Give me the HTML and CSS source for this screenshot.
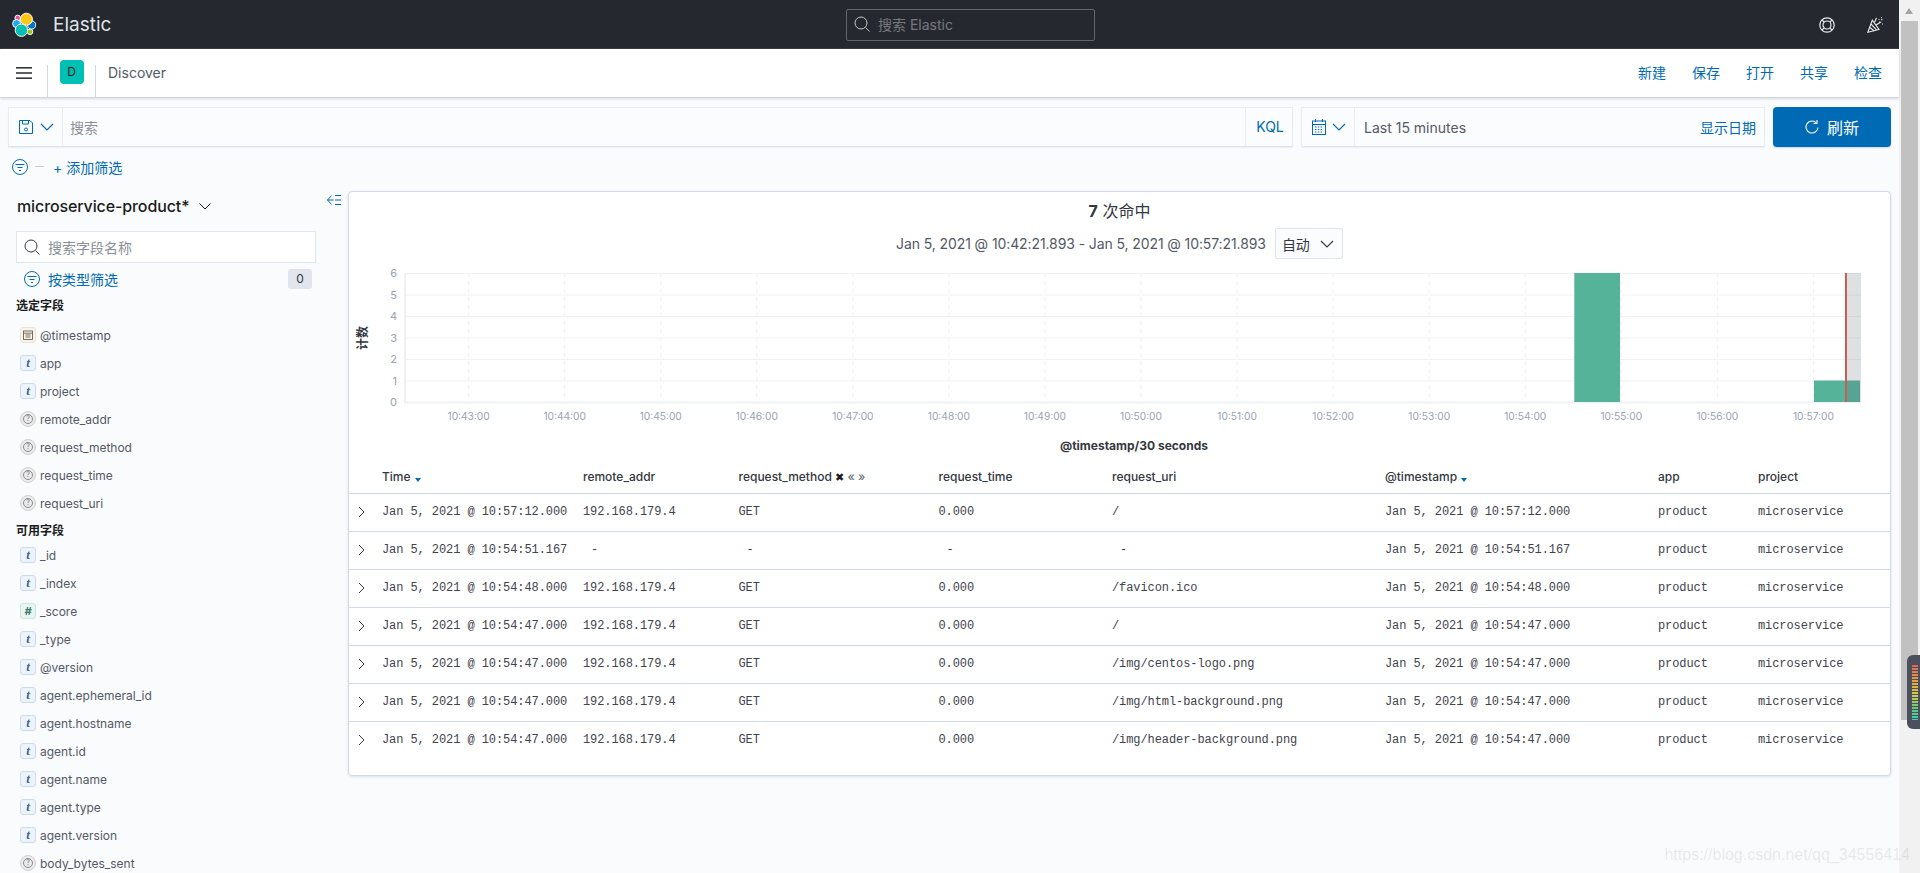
FILE: index.html
```html
<!DOCTYPE html>
<html>
<head>
<meta charset="utf-8">
<title>Discover - Elastic</title>
<link rel="stylesheet" href="styles.css">
</head>
<body>

<div id="container">
<div id="main">

	<!-- top dark bar -->
	<div class="header">
		<div class="brand">
			<svg class="logo" width="32" height="32" viewBox="0 0 32 32">
				<g stroke="#fff" stroke-width="1">
					<circle cx="13.7" cy="9" r="2.8" fill="#f04e98"/>
					<circle cx="12.6" cy="14.6" r="4" fill="#1ba9f5"/>
					<circle cx="27.6" cy="16" r="4.2" fill="#0077cc"/>
					<circle cx="26" cy="22.8" r="2.8" fill="#93c90e"/>
					<circle cx="22.4" cy="10.2" r="6" fill="#fec514"/>
					<circle cx="17.4" cy="21.2" r="6.2" fill="#00bfb3"/>
				</g>
			</svg>
			<span class="brand-name">Elastic</span>
		</div>
		<div class="global-search">
			<svg width="16" height="16" viewBox="0 0 16 16" fill="none" stroke="#c4c6ca"><circle cx="7" cy="7" r="6"/><path d="M11.5 11.5L15.5 15.5"/></svg>
			<span>搜索 Elastic</span>
		</div>
		<div class="header-icons">
			<svg width="16" height="16" viewBox="0 0 16 16" fill="none" stroke="#e8e9ec" stroke-width="1.2"><circle cx="8" cy="8" r="7.2"/><circle cx="8" cy="8" r="4"/><path d="M3 3l2.2 2.2M13 3l-2.2 2.2M3 13l2.2-2.2M13 13l-2.2-2.2"/></svg>
			<svg width="16" height="16" viewBox="0 0 16 16" fill="none" stroke="#e8e9ec" stroke-width="1.1"><path d="M.8 15.2L5.3 3.2L12 12.5Z"/><path d="M2.8 10.5l4.5 3.5M4 7l5.5 5.8"/><path d="M7.5 5.5L9.5.8M9 8l5-3"/><path d="M11.5 2.5h1M14 .8h1M14 2.8h1.5M12 5h1M15 7h1"/></svg>
		</div>
	</div>

	<!-- breadcrumb bar -->
	<div class="nav">
		<div class="nav-cell">
			<svg width="16" height="12" viewBox="0 0 16 12" fill="#343741"><rect width="16" height="1.6"/><rect y="5.2" width="16" height="1.6"/><rect y="10.4" width="16" height="1.6"/></svg>
		</div>
		<div class="nav-rule"></div>
		<div class="nav-cell"><div class="avatar">D</div></div>
		<div class="nav-rule"></div>
		<div class="crumb">Discover</div>
		<div class="nav-links">
			<a>新建</a><a>保存</a><a>打开</a><a>共享</a><a>检查</a>
		</div>
	</div>

	<!-- query bar -->
	<div class="query">
		<div class="query-box search-box">
			<div class="query-btn save-btn">
				<svg width="16" height="16" viewBox="0 0 16 16" fill="none" stroke="#006bb4"><path d="M1.5 1.5h10.5l2.5 2.5v10.5h-13z"/><path d="M4.5 1.5v3.5h6v-3.5"/><circle cx="8" cy="10.5" r="1.5"/></svg>
				<svg class="chev" width="14" height="8" viewBox="0 0 14 8" fill="none" stroke="#006bb4" stroke-width="1.1"><path d="M1 1l6 6 6-6"/></svg>
			</div>
			<div class="query-text placeholder">搜索</div>
			<div class="kql">KQL</div>
		</div>
		<div class="query-box date-box">
			<div class="query-btn cal-btn">
				<svg width="14" height="16" viewBox="0 0 14 16" fill="none" stroke="#006bb4"><rect x=".5" y="2" width="13" height="13.5"/><path d="M.5 5.5h13M3.5 0v3M10.5 0v3"/><path d="M3 8h8M3 10.5h8M3 13h8" stroke-dasharray="1.4 1.4"/></svg>
				<svg class="chev" width="14" height="8" viewBox="0 0 14 8" fill="none" stroke="#006bb4" stroke-width="1.1"><path d="M1 1l6 6 6-6"/></svg>
			</div>
			<div class="query-text date-text">Last 15 minutes</div>
			<a class="show-dates">显示日期</a>
		</div>
		<div class="refresh">
			<svg width="14" height="16" viewBox="0 0 14 16" fill="none" stroke="#fff" stroke-width="1.1"><path d="M11.5 4A6 6 0 1 0 13 8.5"/><path d="M12 1v3.5H8.5"/></svg>
			<span>刷新</span>
		</div>
	</div>

	<!-- filter row -->
	<div class="filters">
		<svg width="16" height="16" viewBox="0 0 16 16" fill="none" stroke="#006bb4"><circle cx="8" cy="8" r="7.5"/><path d="M3.5 5.5h9M5.5 8.5h5M7 11.5h2"/></svg>
		<span class="filter-dash"></span>
		<a class="add-filter"><span class="plus">+</span>添加筛选</a>
	</div>

	<div class="content">

		<!-- field list -->
		<div class="sidebar">
			<div class="index-row">
				<div class="index-name">microservice-product*
					<svg width="12" height="7" viewBox="0 0 12 7" fill="none" stroke="#1a1c21"><path d="M.5.5L6 6l5.5-5.5"/></svg>
				</div>
				<svg class="collapse" width="14" height="10" viewBox="0 0 14 10" fill="none" stroke="#006bb4"><path d="M4.5.5L.5 5l4 4.5M.5 5h6M8 .5h6M8 5h6M8 9.5h6"/></svg>
			</div>
			<div class="field-search">
				<svg width="16" height="16" viewBox="0 0 16 16" fill="none" stroke="#343741"><circle cx="7" cy="7" r="6"/><path d="M11.5 11.5L15.5 15.5"/></svg>
				<span>搜索字段名称</span>
			</div>
			<div class="type-filter">
				<svg width="16" height="16" viewBox="0 0 16 16" fill="none" stroke="#006bb4"><circle cx="8" cy="8" r="7.5"/><path d="M3.5 5.5h9M5.5 8.5h5M7 11.5h2"/></svg>
				<a>按类型筛选</a>
				<span class="badge">0</span>
			</div>

			<div class="field-head">选定字段</div>
			<ul class="fields">
				<li><span class="token tok-date"><svg width="10" height="10" viewBox="0 0 10 10" fill="none" stroke="#6b5f4c" stroke-width=".9"><rect x=".5" y="1" width="9" height="8.5"/><path d="M.5 3.2h9M2.5 5h5M2.5 7h5"/></svg></span>@timestamp</li>
				<li><span class="token tok-str">t</span>app</li>
				<li><span class="token tok-str">t</span>project</li>
				<li><span class="token tok-any"><i>?</i></span>remote_addr</li>
				<li><span class="token tok-any"><i>?</i></span>request_method</li>
				<li><span class="token tok-any"><i>?</i></span>request_time</li>
				<li><span class="token tok-any"><i>?</i></span>request_uri</li>
			</ul>

			<div class="field-head field-head-2">可用字段</div>
			<ul class="fields fields-2">
				<li><span class="token tok-str">t</span>_id</li>
				<li><span class="token tok-str">t</span>_index</li>
				<li><span class="token tok-num">#</span>_score</li>
				<li><span class="token tok-str">t</span>_type</li>
				<li><span class="token tok-str">t</span>@version</li>
				<li><span class="token tok-str">t</span>agent.ephemeral_id</li>
				<li><span class="token tok-str">t</span>agent.hostname</li>
				<li><span class="token tok-str">t</span>agent.id</li>
				<li><span class="token tok-str">t</span>agent.name</li>
				<li><span class="token tok-str">t</span>agent.type</li>
				<li><span class="token tok-str">t</span>agent.version</li>
				<li><span class="token tok-any"><i>?</i></span>body_bytes_sent</li>
			</ul>
		</div>

		<!-- results -->
		<div class="card">
			<div class="hits"><b>7</b> 次命中</div>
			<div class="range">
				<span class="range-text">Jan 5, 2021 @ 10:42:21.893 - Jan 5, 2021 @ 10:57:21.893</span>
				<div class="interval">自动
					<svg width="14" height="8" viewBox="0 0 14 8" fill="none" stroke="#343741" stroke-width="1.1"><path d="M1 1l6 6 6-6"/></svg>
				</div>
			</div>

			<svg class="chart" width="1541" height="200" viewBox="0 0 1541 200">
				<path class="grid-h" d="M56 14.5H1512M56 36H1512M56 57.5H1512M56 79H1512M56 100.5H1512M56 122H1512"/>
				<path class="grid-v" d="M119.6 14V143M215.66 14V143M311.72 14V143M407.78 14V143M503.84 14V143M599.9 14V143M695.96 14V143M792.02 14V143M888.08 14V143M984.14 14V143M1080.2 14V143M1176.26 14V143M1272.32 14V143M1368.38 14V143M1464.44 14V143"/>
				<path class="axis" d="M56 14V143.5H1512"/>
				<rect class="bar" x="1225.3" y="14" width="45.7" height="129"/>
				<rect class="bar" x="1465" y="121.5" width="46" height="21.5"/>
				<rect class="shade" x="1496.5" y="14" width="15.5" height="129"/>
				<rect class="now" x="1496" y="14" width="2" height="129"/>
				<g class="y-ticks">
					<text x="48" y="18">6</text>
					<text x="48" y="39.5">5</text>
					<text x="48" y="61">4</text>
					<text x="48" y="82.5">3</text>
					<text x="48" y="104">2</text>
					<text x="48" y="125.5">1</text>
					<text x="48" y="147">0</text>
				</g>
				<g class="x-ticks">
					<text x="119.6" y="161">10:43:00</text>
					<text x="215.66" y="161">10:44:00</text>
					<text x="311.72" y="161">10:45:00</text>
					<text x="407.78" y="161">10:46:00</text>
					<text x="503.84" y="161">10:47:00</text>
					<text x="599.9" y="161">10:48:00</text>
					<text x="695.96" y="161">10:49:00</text>
					<text x="792.02" y="161">10:50:00</text>
					<text x="888.08" y="161">10:51:00</text>
					<text x="984.14" y="161">10:52:00</text>
					<text x="1080.2" y="161">10:53:00</text>
					<text x="1176.26" y="161">10:54:00</text>
					<text x="1272.32" y="161">10:55:00</text>
					<text x="1368.38" y="161">10:56:00</text>
					<text x="1464.44" y="161">10:57:00</text>
				</g>
				<text class="axis-title" transform="translate(18 79) rotate(-90)">计数</text>
				<text class="axis-title" x="785" y="191">@timestamp/30 seconds</text>
			</svg>

			<table class="docs">
				<colgroup>
					<col class="c-toggle"><col class="c-time"><col class="c-addr"><col class="c-method"><col class="c-rtime"><col class="c-uri"><col class="c-stamp"><col class="c-app"><col>
				</colgroup>
				<thead>
					<tr>
						<th></th>
						<th>Time <span class="sort"></span></th>
						<th>remote_addr</th>
						<th>request_method <span class="col-x">✖</span> <span class="col-mv">«</span> <span class="col-mv">»</span></th>
						<th>request_time</th>
						<th>request_uri</th>
						<th>@timestamp <span class="sort"></span></th>
						<th>app</th>
						<th>project</th>
					</tr>
				</thead>
				<tbody>
					<tr>
						<td class="toggle"><svg width="7" height="12" viewBox="0 0 7 12" fill="none" stroke="#343741"><path d="M1 1l5 5-5 5"/></svg></td>
						<td>Jan 5, 2021 @ 10:57:12.000</td><td>192.168.179.4</td><td>GET</td><td>0.000</td><td>/</td><td>Jan 5, 2021 @ 10:57:12.000</td><td>product</td><td>microservice</td>
					</tr>
					<tr>
						<td class="toggle"><svg width="7" height="12" viewBox="0 0 7 12" fill="none" stroke="#343741"><path d="M1 1l5 5-5 5"/></svg></td>
						<td>Jan 5, 2021 @ 10:54:51.167</td><td class="empty">-</td><td class="empty">-</td><td class="empty">-</td><td class="empty">-</td><td>Jan 5, 2021 @ 10:54:51.167</td><td>product</td><td>microservice</td>
					</tr>
					<tr>
						<td class="toggle"><svg width="7" height="12" viewBox="0 0 7 12" fill="none" stroke="#343741"><path d="M1 1l5 5-5 5"/></svg></td>
						<td>Jan 5, 2021 @ 10:54:48.000</td><td>192.168.179.4</td><td>GET</td><td>0.000</td><td>/favicon.ico</td><td>Jan 5, 2021 @ 10:54:48.000</td><td>product</td><td>microservice</td>
					</tr>
					<tr>
						<td class="toggle"><svg width="7" height="12" viewBox="0 0 7 12" fill="none" stroke="#343741"><path d="M1 1l5 5-5 5"/></svg></td>
						<td>Jan 5, 2021 @ 10:54:47.000</td><td>192.168.179.4</td><td>GET</td><td>0.000</td><td>/</td><td>Jan 5, 2021 @ 10:54:47.000</td><td>product</td><td>microservice</td>
					</tr>
					<tr>
						<td class="toggle"><svg width="7" height="12" viewBox="0 0 7 12" fill="none" stroke="#343741"><path d="M1 1l5 5-5 5"/></svg></td>
						<td>Jan 5, 2021 @ 10:54:47.000</td><td>192.168.179.4</td><td>GET</td><td>0.000</td><td>/img/centos-logo.png</td><td>Jan 5, 2021 @ 10:54:47.000</td><td>product</td><td>microservice</td>
					</tr>
					<tr>
						<td class="toggle"><svg width="7" height="12" viewBox="0 0 7 12" fill="none" stroke="#343741"><path d="M1 1l5 5-5 5"/></svg></td>
						<td>Jan 5, 2021 @ 10:54:47.000</td><td>192.168.179.4</td><td>GET</td><td>0.000</td><td>/img/html-background.png</td><td>Jan 5, 2021 @ 10:54:47.000</td><td>product</td><td>microservice</td>
					</tr>
					<tr>
						<td class="toggle"><svg width="7" height="12" viewBox="0 0 7 12" fill="none" stroke="#343741"><path d="M1 1l5 5-5 5"/></svg></td>
						<td>Jan 5, 2021 @ 10:54:47.000</td><td>192.168.179.4</td><td>GET</td><td>0.000</td><td>/img/header-background.png</td><td>Jan 5, 2021 @ 10:54:47.000</td><td>product</td><td>microservice</td>
					</tr>
				</tbody>
			</table>
		</div>
	</div>
</div>

<!-- browser scrollbar -->
<div class="scrollbar">
	<div class="scroll-up"></div>
	<div class="scroll-thumb"></div>
</div>

<div class="meter"><div class="meter-bars"></div></div>
<div class="watermark">https://blog.csdn.net/qq_34556414</div>

</div>
</body>
</html>
```

FILE: styles.css
```css
html, body {
	margin: 0;
	padding: 0;
	height: 100%;
	overflow: hidden;
}
body {
	font-family: Inter, "Noto Sans CJK SC", sans-serif;
	font-size: 14px;
	color: #343741;
	background-color: #fafbfd;
}
a {
	color: #006bb4;
}
svg {
	flex: none;
	display: block;
}

#container {
	position: relative;
	display: flex;
	height: 873px;
	overflow: hidden;
}
#main {
	flex: 1;
	min-width: 0;
	display: flex;
	flex-direction: column;
}

/* top dark bar */
.header {
	flex: none;
	height: 49px;
	background-color: #25282f;
	display: grid;
	grid-template-columns: 846px 249px 1fr;
	align-items: center;
}
.brand {
	display: flex;
	align-items: center;
	padding-left: 4px;
}
.brand-name {
	margin-left: 17px;
	font-size: 19px;
	color: #dfe3e8;
}
.global-search {
	height: 32px;
	box-sizing: border-box;
	border: 1px solid #64666b;
	border-radius: 2px;
	display: flex;
	align-items: center;
	padding: 0 0 2px 7px;
	gap: 8px;
	color: #77797e;
}
.header-icons {
	display: flex;
	justify-content: flex-end;
	gap: 32px;
	padding-right: 16px;
}

/* breadcrumb bar */
.nav {
	flex: none;
	height: 48px;
	background-color: #fff;
	display: flex;
	align-items: center;
	box-shadow: 0 1px 2px #c9ced8, 0 2px 3px #e4e7ee;
	position: relative;
}
.nav-cell {
	width: 47px;
	display: flex;
	justify-content: center;
}
.nav-rule {
	width: 1px;
	height: 32px;
	align-self: flex-end;
	background-color: #d3dae6;
}
.avatar {
	width: 24px;
	height: 24px;
	margin-top: -2px;
	border-radius: 4px;
	background-color: #00bfb3;
	color: #1a1c21;
	font-size: 12px;
	line-height: 24px;
	text-align: center;
}
.crumb {
	margin-left: 12px;
	color: #535966;
	margin-top: -2px;
}
.nav-links {
	margin-left: auto;
	padding-right: 17px;
	display: flex;
	gap: 26px;
	margin-top: -2px;
}

/* query bar */
.query {
	flex: none;
	margin-top: 10px;
	padding: 0 8px;
	height: 40px;
	display: flex;
	gap: 8px;
}
.query-box {
	box-sizing: border-box;
	height: 40px;
	display: flex;
	align-items: center;
	background-color: #fbfcfd;
	border: 1px solid #e9edf3;
	border-bottom-color: #dfe3ec;
	box-shadow: 0 1px 1px #eceff5;
}
.search-box {
	flex: 1;
}
.date-box {
	width: 464px;
}
.query-btn {
	height: 100%;
	display: flex;
	align-items: center;
	gap: 6px;
	padding-left: 10px;
	box-sizing: border-box;
	border-right: 1px solid #e9edf3;
}
.save-btn {
	width: 54px;
	padding-left: 9px;
}
.cal-btn {
	width: 53px;
}
.query-text {
	flex: 1;
	padding-left: 7px;
	color: #535966;
}
.date-text {
	padding-left: 9px;
}
.placeholder {
	color: #8a8f99;
}
.kql {
	height: 100%;
	width: 47px;
	box-sizing: border-box;
	border-left: 1px solid #e9edf3;
	padding-left: 2px;
	color: #006bb4;
	line-height: 38px;
	text-align: center;
}
.show-dates {
	padding-right: 8px;
}
.refresh {
	width: 118px;
	height: 40px;
	border-radius: 4px;
	background-color: #006bb4;
	color: #fff;
	display: flex;
	align-items: center;
	justify-content: center;
	gap: 8px;
	box-shadow: 0 1px 2px #c9d6e6;
	font-size: 16px;
}

/* filter row */
.filters {
	flex: none;
	height: 44px;
	padding: 0 0 5px 12px;
	box-sizing: border-box;
	display: flex;
	align-items: center;
}
.filter-dash {
	width: 9px;
	height: 1px;
	margin: 0 9px 0 7px;
	background-color: #c9ced8;
}
.plus {
	margin-right: 4px;
}

.content {
	flex: 1;
	min-height: 0;
	display: flex;
}

/* field list */
.sidebar {
	flex: none;
	width: 348px;
	box-sizing: border-box;
	padding-left: 16px;
	overflow: hidden;
}
.index-row {
	height: 30px;
	display: flex;
	align-items: center;
	justify-content: space-between;
	padding-right: 7px;
}
.index-name {
	display: flex;
	align-items: center;
	gap: 10px;
	font-size: 16px;
	font-weight: 500;
	letter-spacing: -.11px;
	color: #1a1c21;
	margin-left: 1px;
}
.collapse {
	margin-top: -12px;
}
.field-search {
	width: 300px;
	height: 32px;
	margin-top: 10px;
	box-sizing: border-box;
	border: 1px solid #e0e5ee;
	background-color: #fff;
	display: flex;
	align-items: center;
	gap: 8px;
	padding: 0 0 1px 7px;
	color: #8a8f99;
}
.type-filter {
	width: 296px;
	height: 20px;
	margin-top: 6px;
	padding-left: 8px;
	box-sizing: border-box;
	display: flex;
	align-items: center;
	gap: 8px;
}
.badge {
	margin-left: auto;
	width: 24px;
	height: 20px;
	border-radius: 3px;
	background-color: #e0e5ee;
	color: #343741;
	font-size: 12px;
	line-height: 20px;
	text-align: center;
}
.field-head {
	height: 18px;
	margin-top: 8px;
	font-size: 12px;
	font-weight: 700;
	line-height: 18px;
	color: #1a1c21;
}
.field-head-2 {
	margin-top: 5px;
}
.fields {
	list-style: none;
	margin: 6px 0 0;
	padding: 0;
}
.fields-2 {
	margin-top: 1px;
}
.fields li {
	height: 28px;
	display: flex;
	align-items: center;
	padding-left: 4px;
	gap: 4px;
	font-size: 12px;
	color: #535966;
}
.token {
	width: 16px;
	height: 16px;
	box-sizing: border-box;
	border-radius: 3px;
	border: 1px solid;
	display: flex;
	align-items: center;
	justify-content: center;
	font-size: 11px;
	font-weight: 700;
	font-style: italic;
}
.tok-str {
	background-color: #edf3fa;
	border-color: #c9dcee;
	color: #40678a;
	font-family: "Liberation Serif", serif;
	font-size: 13px;
}
.tok-num {
	background-color: #e8f5f1;
	border-color: #c6e7dd;
	color: #3f7a68;
}
.tok-date {
	background-color: #f8f4ed;
	border-color: #eae1d2;
}
.tok-any {
	border-radius: 50%;
	background-color: #ececec;
	border-color: #d0d0d0;
}
.tok-any i {
	width: 10px;
	height: 10px;
	box-sizing: border-box;
	border: 1px solid #8a8a8a;
	border-radius: 50%;
	color: #777;
	font-size: 7px;
	font-style: normal;
	font-weight: 400;
	line-height: 8px;
	text-align: center;
}

/* results card */
.card {
	flex: 1;
	align-self: flex-start;
	min-width: 0;
	height: 585px;
	margin-right: 8px;
	box-sizing: border-box;
	background-color: #fff;
	border: 1px solid #d3dae6;
	border-radius: 4px;
	box-shadow: 0 1px 3px #dfe3ec;
}
.hits {
	height: 24px;
	margin-top: 7px;
	text-align: center;
	font-size: 16px;
	line-height: 24px;
	color: #343741;
}
.range {
	height: 31px;
	margin-top: 5px;
	display: flex;
	justify-content: center;
	align-items: center;
	gap: 9px;
	color: #535966;
}
.range-text {
	letter-spacing: -.1px;
}
.interval {
	width: 68px;
	height: 31px;
	box-sizing: border-box;
	border: 1px solid #e0e5ee;
	border-radius: 2px;
	background-color: #fbfcfd;
	display: flex;
	align-items: center;
	padding-left: 6px;
	gap: 10px;
	color: #343741;
}

/* chart */
.grid-h {
	stroke: #eff1f4;
	stroke-width: 1;
	fill: none;
}
.grid-v {
	stroke: #eff1f4;
	stroke-dasharray: 4 4;
	fill: none;
}
.axis {
	stroke: #eff1f4;
	stroke-width: 2;
	fill: none;
}
.bar {
	fill: #54b399;
}
.shade {
	fill: #69707d;
	fill-opacity: .22;
}
.now {
	fill: #cb5c52;
}
.y-ticks text {
	font-size: 11px;
	fill: #98a2b3;
	text-anchor: end;
}
.x-ticks text {
	font-size: 10.2px;
	fill: #98a2b3;
	text-anchor: middle;
}
.axis-title {
	font-size: 12px;
	font-weight: 700;
	fill: #343741;
	text-anchor: middle;
}

/* document table */
.docs {
	width: 100%;
	table-layout: fixed;
	border-collapse: collapse;
	font-size: 12px;
}
.c-toggle { width: 33px; }
.c-time { width: 201px; }
.c-addr { width: 155.5px; }
.c-method { width: 200px; }
.c-rtime { width: 173.5px; }
.c-uri { width: 273px; }
.c-stamp { width: 273px; }
.c-app { width: 100px; }

.docs th {
	height: 34px;
	padding: 0;
	text-align: left;
	font-weight: 500;
	border-bottom: 1px solid #d3dae6;
	color: #343741;
}
.docs td {
	height: 38px;
	padding: 0 0 2px;
	box-sizing: border-box;
	font-family: "Liberation Mono", monospace;
	letter-spacing: -.08px;
	color: #3f434e;
	border-bottom: 1px solid #d3dae6;
}
.docs tr:last-child td {
	border-bottom: 0;
}
.docs .toggle {
	padding-left: 9px;
}
.docs .empty {
	padding-left: 8px;
}
.sort {
	display: inline-block;
	width: 0;
	height: 0;
	margin-left: 1px;
	vertical-align: -1px;
	border-left: 3.5px solid transparent;
	border-right: 3.5px solid transparent;
	border-top: 4px solid #006bb4;
}
.col-x {
	font-family: "DejaVu Sans", sans-serif;
	font-size: 11px;
	color: #1a1c21;
}
.col-mv {
	color: #69707d;
}

/* browser scrollbar */
.scrollbar {
	flex: none;
	width: 21px;
	background-color: #f1f1f1;
	padding: 0 2px;
	box-sizing: border-box;
}
.scroll-up {
	height: 21px;
	position: relative;
}
.scroll-up:after {
	content: "";
	position: absolute;
	left: 4px;
	top: 8px;
	border-left: 4.5px solid transparent;
	border-right: 4.5px solid transparent;
	border-bottom: 6px solid #a3a3a3;
}
.scroll-thumb {
	height: 699px;
	background-color: #c1c1c1;
}

/* overlays from the screenshot */
.meter {
	position: absolute;
	right: 0;
	top: 655px;
	width: 13px;
	height: 74px;
	background-color: #4b505c;
	border-radius: 6px 0 0 6px;
}
.meter-bars {
	position: absolute;
	left: 5px;
	top: 10px;
	width: 6px;
	height: 55px;
	background-image:
		repeating-linear-gradient(to bottom, transparent 0, transparent 2px, #4b505c 2px, #4b505c 3px),
		linear-gradient(to bottom, #e0635a 0, #e5a33e 30%, #d4cf4b 55%, #62c77e 80%, #3fd0b0 100%);
}
.watermark {
	position: absolute;
	right: 10px;
	top: 846px;
	font-family: "Liberation Sans", sans-serif;
	font-size: 16px;
	color: rgba(120, 125, 140, .16);
	white-space: nowrap;
}
```
